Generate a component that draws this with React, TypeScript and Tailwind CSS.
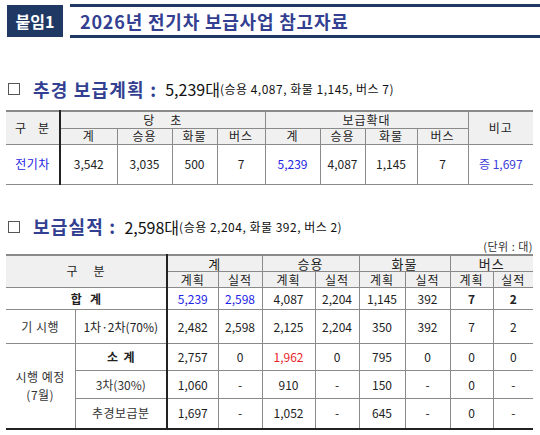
const blue = "text-[#2323e6]";

function Th({ children, className = "", ...rest }: React.ThHTMLAttributes<HTMLTableCellElement>) {
  return (
    <th
      {...rest}
      className={"border border-[#8a8a8a] bg-[#f0f0f0] p-0 text-center align-middle font-normal tracking-[1px] " + className}
    >
      {children}
    </th>
  );
}

function Td({ children, className = "", ...rest }: React.TdHTMLAttributes<HTMLTableCellElement>) {
  return (
    <td {...rest} className={"border border-[#8a8a8a] p-0 text-center align-middle " + className}>
      {children}
    </td>
  );
}

function Square() {
  return <span className="inline-block h-[12px] w-[12px] border border-[#555] bg-white" />;
}

export default function App() {
  return (
    <div className="relative h-[435px] w-[540px] overflow-hidden bg-white font-['Noto_Sans_CJK_KR',sans-serif]">
      {/* title bar */}
      <div className="flex items-start pt-[4px]">
        <div className="ml-[7px] mt-[1px] flex h-[32px] w-[56px] items-center justify-center bg-[#1f3864] text-[16px] font-bold text-white">
          붙임1
        </div>
        <div className="ml-[7px] flex h-[34px] flex-1 items-center border-y-[3px] border-[#1f3864] pl-[10px] text-[18px] font-bold tracking-[0.8px] text-[#333f91]">
          2026년 전기차 보급사업 참고자료
        </div>
      </div>

      {/* section 1 */}
      <div className="mt-[40px] flex h-[22px] items-center pl-[8px] text-[#111]">
        <Square />
        <span className="ml-[13px] text-[18px] font-bold tracking-[1.2px] text-[#333f91]">추경 보급계획 :</span>
        <span className="ml-[8px] text-[16px]">5,239대</span>
        <span className="text-[12px] tracking-[0.5px]">(승용 4,087, 화물 1,145, 버스 7)</span>
      </div>

      <table className="ml-[6px] mt-[10px] w-[527px] table-fixed border-collapse text-[12px] leading-none text-[#222]">
        <colgroup>
          <col className="w-[54px]" />
          <col className="w-[57px]" />
          <col className="w-[55px]" />
          <col className="w-[45px]" />
          <col className="w-[48px]" />
          <col className="w-[55px]" />
          <col className="w-[45px]" />
          <col className="w-[52px]" />
          <col className="w-[51px]" />
          <col className="w-[65px]" />
        </colgroup>
        <tbody>
          <tr className="h-[17px]">
            <Th rowSpan={2} className="border-l-0 border-t-2 border-t-[#8a8a8a] border-r-2 border-r-[#222] font-medium">
              구{"\u00a0\u00a0\u00a0"}분
            </Th>
            <Th colSpan={4} className="border-t-2 border-t-[#8a8a8a]">
              당{"\u00a0\u00a0\u00a0\u00a0"}초
            </Th>
            <Th colSpan={4} className="border-t-2 border-t-[#8a8a8a]">보급확대</Th>
            <Th rowSpan={2} className="border-r-0 border-t-2 border-t-[#8a8a8a]">비고</Th>
          </tr>
          <tr className="h-[16px]">
            <Th>계</Th>
            <Th>승용</Th>
            <Th>화물</Th>
            <Th>버스</Th>
            <Th>계</Th>
            <Th>승용</Th>
            <Th>화물</Th>
            <Th>버스</Th>
          </tr>
          <tr className="h-[40px]">
            <Td className={"border-l-0 border-r-2 border-r-[#222] tracking-[0.5px] " + blue}>전기차</Td>
            <Td>3,542</Td>
            <Td>3,035</Td>
            <Td>500</Td>
            <Td>7</Td>
            <Td className={blue}>5,239</Td>
            <Td>4,087</Td>
            <Td>1,145</Td>
            <Td>7</Td>
            <Td className="border-r-0 text-[#3b3bd6]">증 1,697</Td>
          </tr>
        </tbody>
      </table>

      {/* section 2 */}
      <div className="mt-[31px] flex h-[22px] items-center pl-[8px] text-[#111]">
        <Square />
        <span className="ml-[13px] text-[18px] font-bold tracking-[1.2px] text-[#333f91]">보급실적 :</span>
        <span className="ml-[8px] text-[16px]">2,598대</span>
        <span className="text-[12px] tracking-[0.5px]">(승용 2,204, 화물 392, 버스 2)</span>
      </div>

      <div className="mr-[7px] mt-[1px] text-right text-[11px] leading-[14px] tracking-[0.5px] text-[#333]">
        (단위{"\u00a0"}:{"\u00a0"}대)
      </div>

      <table className="ml-[6px] mt-[1px] w-[527px] table-fixed border-collapse text-[12px] leading-none text-[#222]">
        <colgroup>
          <col className="w-[69px]" />
          <col className="w-[92px]" />
          <col className="w-[51px]" />
          <col className="w-[44px]" />
          <col className="w-[53px]" />
          <col className="w-[44px]" />
          <col className="w-[46px]" />
          <col className="w-[45px]" />
          <col className="w-[43px]" />
          <col className="w-[40px]" />
        </colgroup>
        <tbody>
          <tr className="h-[17px] text-[13px]">
            <Th colSpan={2} rowSpan={2} className="border-l-0 border-t-2 border-t-[#8a8a8a] border-r-2 border-r-[#222] text-[12px]">
              구{"\u00a0\u00a0\u00a0\u00a0"}분
            </Th>
            <Th colSpan={2} className="border-t-2 border-t-[#8a8a8a]">계</Th>
            <Th colSpan={2} className="border-t-2 border-t-[#8a8a8a]">승용</Th>
            <Th colSpan={2} className="border-t-2 border-t-[#8a8a8a]">화물</Th>
            <Th colSpan={2} className="border-r-0 border-t-2 border-t-[#8a8a8a]">버스</Th>
          </tr>
          <tr className="h-[16px]">
            <Th>계획</Th>
            <Th>실적</Th>
            <Th>계획</Th>
            <Th>실적</Th>
            <Th>계획</Th>
            <Th>실적</Th>
            <Th>계획</Th>
            <Th className="border-r-0">실적</Th>
          </tr>
          <tr className="h-[22px]">
            <Td colSpan={2} className="border-l-0 border-r-2 border-r-[#222] font-bold">
              합{"\u00a0\u00a0\u00a0"}계
            </Td>
            <Td className={blue}>5,239</Td>
            <Td className={blue}>2,598</Td>
            <Td>4,087</Td>
            <Td>2,204</Td>
            <Td>1,145</Td>
            <Td>392</Td>
            <Td className="font-semibold">7</Td>
            <Td className="border-r-0 font-semibold">2</Td>
          </tr>
          <tr className="h-[34px]">
            <Td className="border-l-0 tracking-[0.5px] text-[#333]">기 시행</Td>
            <Td className="border-r-2 border-r-[#222]">1차·2차(70%)</Td>
            <Td>2,482</Td>
            <Td>2,598</Td>
            <Td>2,125</Td>
            <Td>2,204</Td>
            <Td>350</Td>
            <Td>392</Td>
            <Td>7</Td>
            <Td className="border-r-0">2</Td>
          </tr>
          <tr className="h-[27px]">
            <Td rowSpan={3} className="border-l-0 border-b-2 border-b-[#222] leading-[18px] tracking-[0.5px] text-[#333]">
              시행 예정
              <br />
              (7월)
            </Td>
            <Td className="border-r-2 border-r-[#222] font-bold">
              소{"\u00a0\u00a0"}계
            </Td>
            <Td>2,757</Td>
            <Td>0</Td>
            <Td className="text-[#e8262a]">1,962</Td>
            <Td>0</Td>
            <Td>795</Td>
            <Td>0</Td>
            <Td>0</Td>
            <Td className="border-r-0">0</Td>
          </tr>
          <tr className="h-[28px]">
            <Td className="border-r-2 border-r-[#222] text-[#333]">3차(30%)</Td>
            <Td>1,060</Td>
            <Td>-</Td>
            <Td>910</Td>
            <Td>-</Td>
            <Td>150</Td>
            <Td>-</Td>
            <Td>0</Td>
            <Td className="border-r-0">-</Td>
          </tr>
          <tr className="h-[30px]">
            <Td className="border-b-2 border-b-[#222] border-r-2 border-r-[#222] tracking-[0.5px] text-[#333]">추경보급분</Td>
            <Td className="border-b-2 border-b-[#222]">1,697</Td>
            <Td className="border-b-2 border-b-[#222]">-</Td>
            <Td className="border-b-2 border-b-[#222]">1,052</Td>
            <Td className="border-b-2 border-b-[#222]">-</Td>
            <Td className="border-b-2 border-b-[#222]">645</Td>
            <Td className="border-b-2 border-b-[#222]">-</Td>
            <Td className="border-b-2 border-b-[#222]">0</Td>
            <Td className="border-b-2 border-b-[#222] border-r-0">-</Td>
          </tr>
        </tbody>
      </table>
    </div>
  );
}
